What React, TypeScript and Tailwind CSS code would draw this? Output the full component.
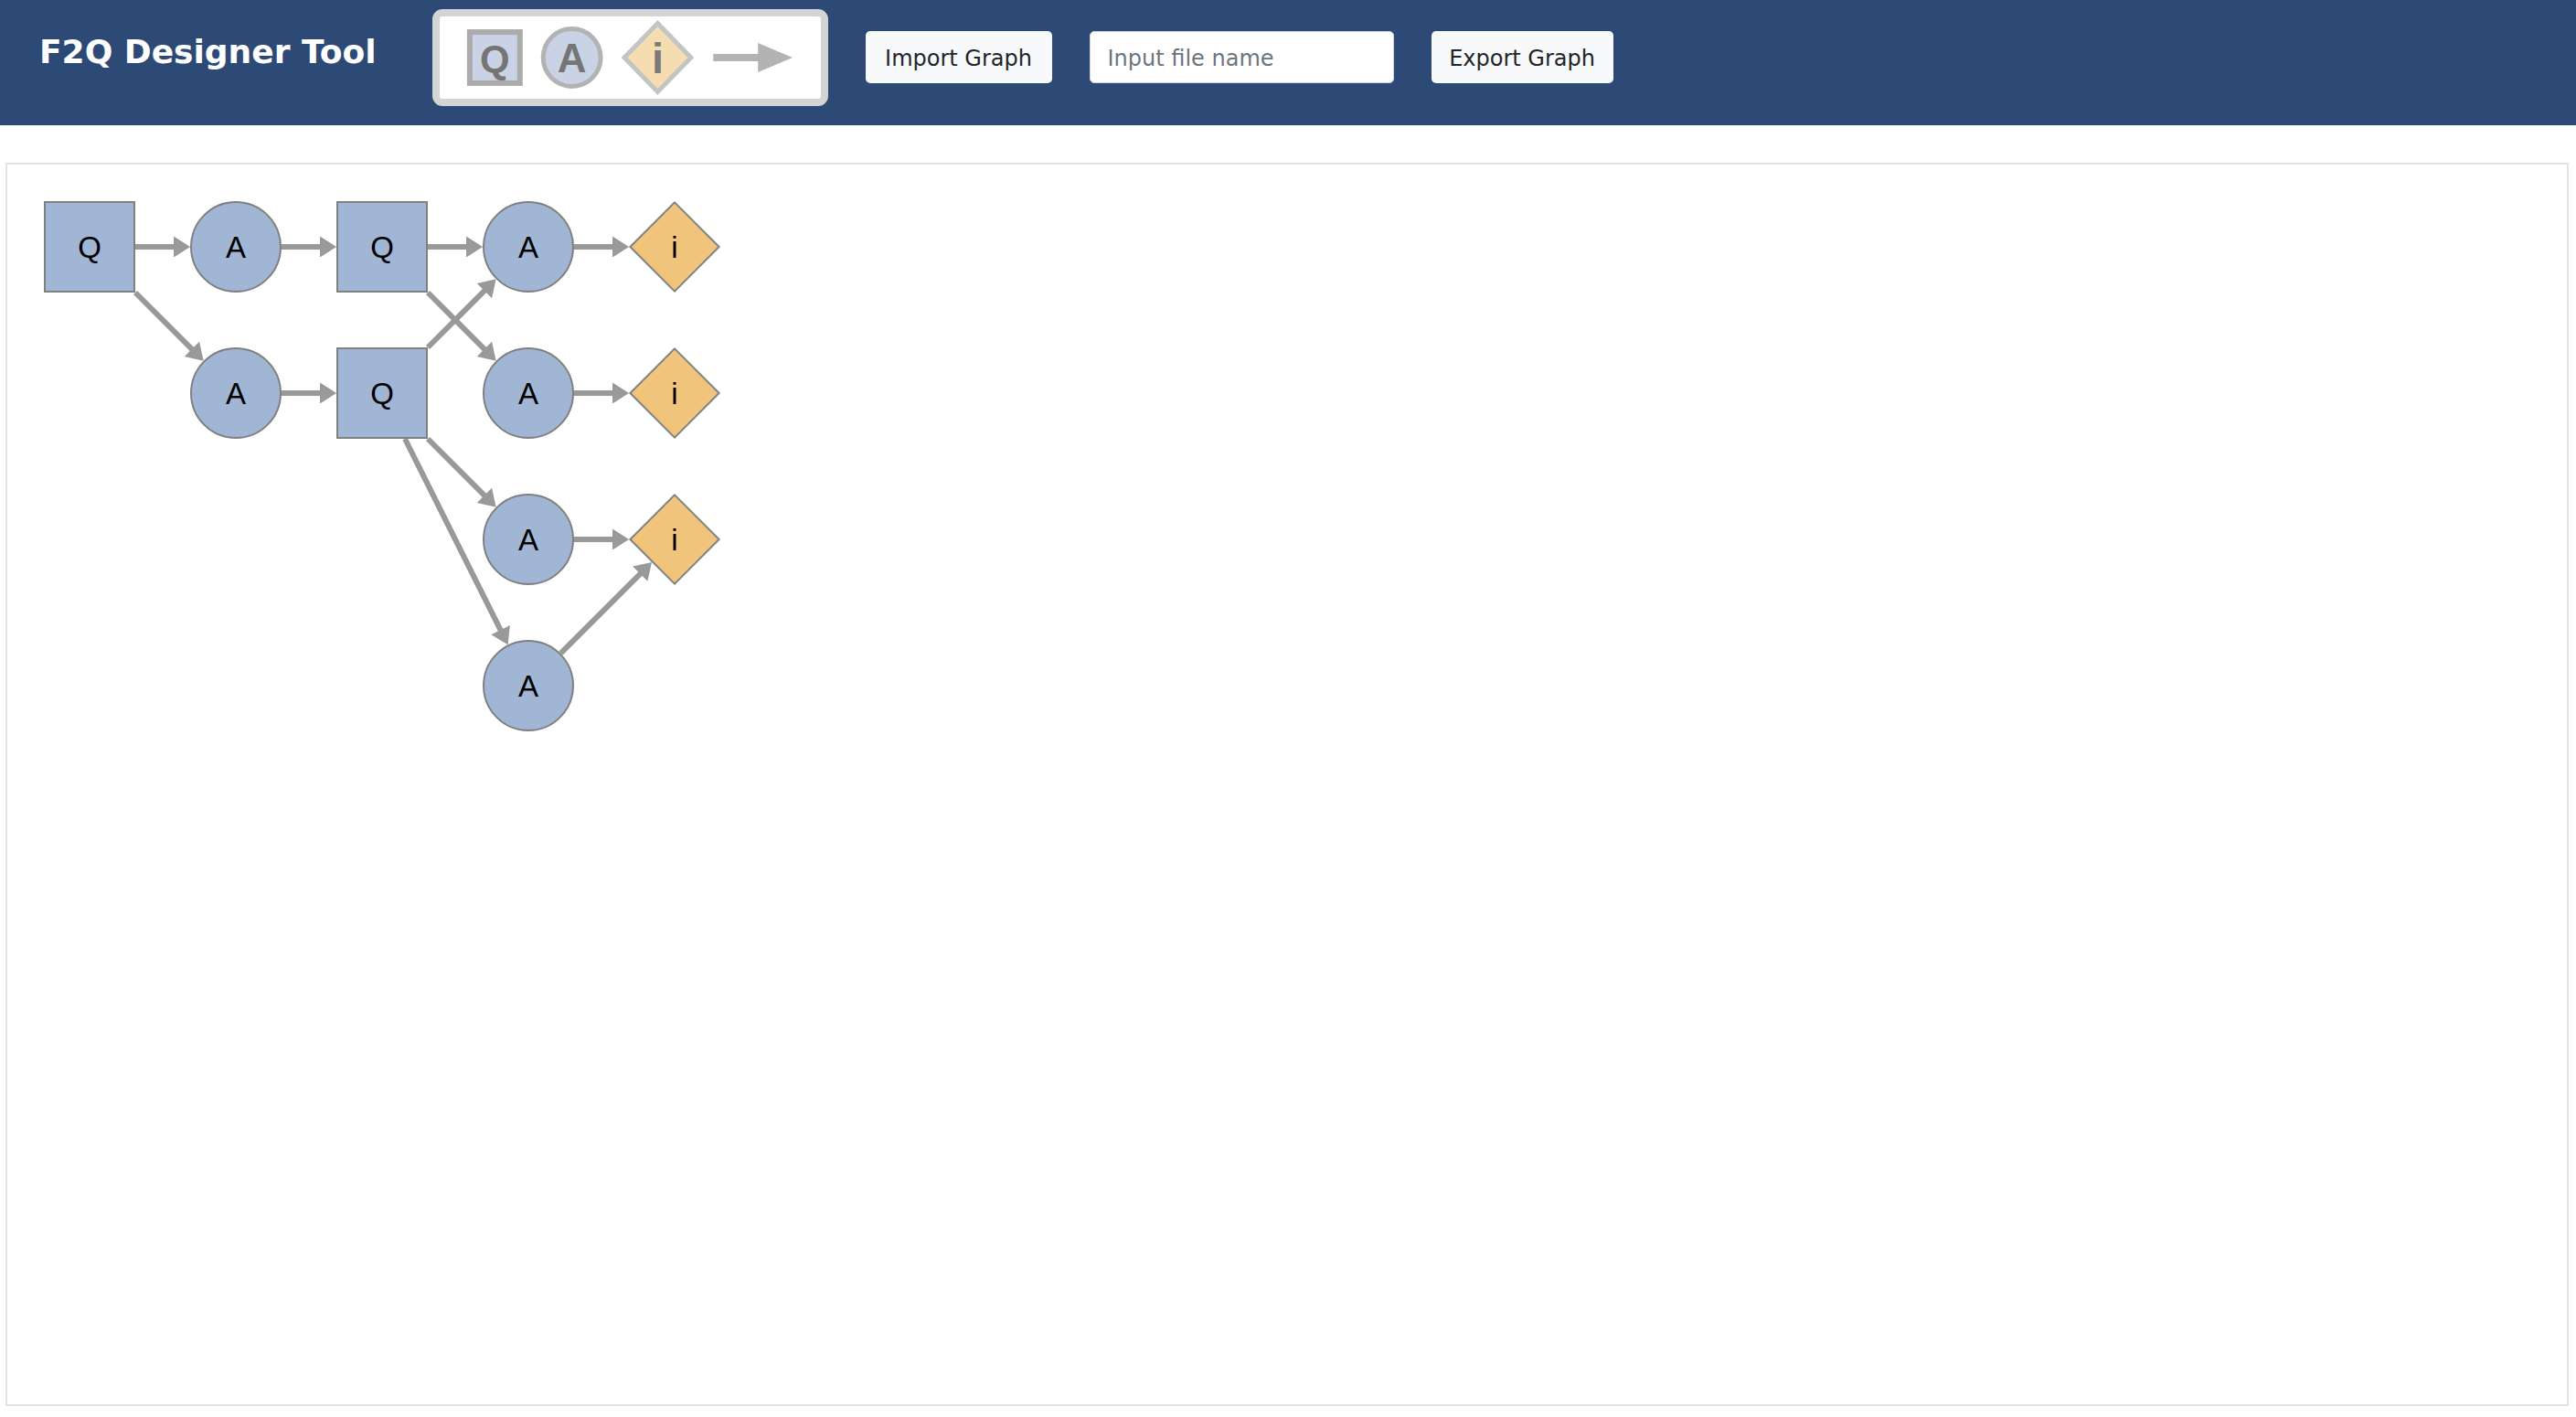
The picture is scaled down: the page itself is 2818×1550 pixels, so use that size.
import React from 'react'

type Kind = 'Q' | 'A' | 'i'

interface GraphNode {
  id: string
  x: number
  y: number
  kind: Kind
}

// canvas inner origin in page coords is (8, 180)
const nodes: GraphNode[] = [
  { id: 'q1', x: 98, y: 270, kind: 'Q' },
  { id: 'a1', x: 258, y: 270, kind: 'A' },
  { id: 'q2', x: 418, y: 270, kind: 'Q' },
  { id: 'a3', x: 578, y: 270, kind: 'A' },
  { id: 'i1', x: 738, y: 270, kind: 'i' },
  { id: 'a2', x: 258, y: 430, kind: 'A' },
  { id: 'q3', x: 418, y: 430, kind: 'Q' },
  { id: 'a4', x: 578, y: 430, kind: 'A' },
  { id: 'i2', x: 738, y: 430, kind: 'i' },
  { id: 'a5', x: 578, y: 590, kind: 'A' },
  { id: 'i3', x: 738, y: 590, kind: 'i' },
  { id: 'a6', x: 578, y: 750, kind: 'A' },
]

const edges: [string, string][] = [
  ['q1', 'a1'],
  ['a1', 'q2'],
  ['q2', 'a3'],
  ['a3', 'i1'],
  ['q1', 'a2'],
  ['a2', 'q3'],
  ['q3', 'a3'],
  ['q2', 'a4'],
  ['a4', 'i2'],
  ['q3', 'a5'],
  ['q3', 'a6'],
  ['a5', 'i3'],
  ['a6', 'i3'],
]

const byId = Object.fromEntries(nodes.map((n) => [n.id, n]))

function reach(kind: Kind, ux: number, uy: number) {
  if (kind === 'Q') return 50 / Math.max(Math.abs(ux), Math.abs(uy))
  if (kind === 'i') return 50 / (Math.abs(ux) + Math.abs(uy))
  return 50
}

function Edge({ from, to }: { from: GraphNode; to: GraphNode }) {
  const dx = to.x - from.x
  const dy = to.y - from.y
  const len = Math.hypot(dx, dy)
  const ux = dx / len
  const uy = dy / len
  const s = reach(from.kind, ux, uy)
  const e = reach(to.kind, -ux, -uy)
  const sx = from.x + ux * s
  const sy = from.y + uy * s
  const tx = to.x - ux * e
  const ty = to.y - uy * e
  const head = 18
  const half = 11.5
  const bx = tx - ux * head
  const by = ty - uy * head
  const px = -uy
  const py = ux
  return (
    <g>
      <line x1={sx} y1={sy} x2={bx + ux} y2={by + uy} stroke="#999999" strokeWidth={6} />
      <polygon
        points={`${tx},${ty} ${bx + px * half},${by + py * half} ${bx - px * half},${by - py * half}`}
        fill="#999999"
      />
    </g>
  )
}

function Node({ node }: { node: GraphNode }) {
  const { x, y, kind } = node
  return (
    <g>
      {kind === 'Q' && <rect x={x - 49} y={y - 49} width={98} height={98} fill="#a1b5d4" stroke="#808080" strokeWidth={2} />}
      {kind === 'A' && <circle cx={x} cy={y} r={49} fill="#a1b5d4" stroke="#808080" strokeWidth={2} />}
      {kind === 'i' && (
        <polygon
          points={`${x},${y - 48.6} ${x + 48.6},${y} ${x},${y + 48.6} ${x - 48.6},${y}`}
          fill="#f1c47c"
          stroke="#808080"
          strokeWidth={2}
        />
      )}
      <text
        x={x}
        y={y + 12}
        textAnchor="middle"
        fontFamily="'Liberation Sans', Arial, sans-serif"
        fontSize={33}
        fill="#000000"
      >
        {kind}
      </text>
    </g>
  )
}

function Toolbox() {
  return (
    <div className="ml-[61px] mt-[10px] h-[106px] w-[433px] rounded-[11px] border-[8px] border-[#d4d4d4] bg-white">
      <svg width="417" height="90" viewBox="0 0 418 90">
        {/* Q */}
        <rect x={33} y={17} width={55} height={56} fill="#c9d3e5" stroke="#ababab" strokeWidth={6} />
        <text x={60.5} y={61} textAnchor="middle" fontFamily="'Liberation Sans', Arial, sans-serif" fontWeight="bold" fontSize={42} fill="#757575">
          Q
        </text>
        {/* A */}
        <circle cx={145} cy={45} r={31.5} fill="#c9d3e5" stroke="#b3b3b3" strokeWidth={5} />
        <text x={145} y={61} textAnchor="middle" fontFamily="'Liberation Sans', Arial, sans-serif" fontWeight="bold" fontSize={44} fill="#757575">
          A
        </text>
        {/* i */}
        <polygon points="239,7.5 275.5,45 239,82.5 202.5,45" fill="#f6dcb1" stroke="#c4c4c4" strokeWidth={5} />
        <text x={239} y={62} textAnchor="middle" fontFamily="'Liberation Sans', Arial, sans-serif" fontWeight="bold" fontSize={47} fill="#7a7a7a">
          i
        </text>
        {/* arrow */}
        <rect x={300} y={41} width={51} height={8} fill="#b3b3b3" />
        <polygon points="349,29 387,45 349,61" fill="#b3b3b3" />
      </svg>
    </div>
  )
}

export default function App() {
  return (
    <div className="min-h-screen bg-white pb-[12px] font-['DejaVu_Sans',sans-serif]">
      {/* Header */}
      <header className="flex h-[137px] items-start bg-[#2c4a75]">
        <h1 className="ml-[43px] mt-[36px] text-[36px] font-bold leading-[42px] text-white">F2Q Designer Tool</h1>

        <Toolbox />

        <button className="ml-[41px] mt-[34px] h-[57px] w-[204px] rounded-[5px] bg-[#f8f9fa] pt-[2px] text-[24px] text-[#212529]">
          Import Graph
        </button>

        <input
          type="text"
          placeholder="Input file name"
          className="ml-[41px] mt-[34px] h-[57px] w-[333px] rounded-[5px] border border-[#ced4da] bg-white px-[19px] pt-[2px] text-[24px] text-[#212529] outline-none placeholder:text-[#6c757d]"
        />

        <button className="ml-[41px] mt-[34px] h-[57px] w-[199px] rounded-[5px] bg-[#f8f9fa] pt-[2px] text-[24px] text-[#212529]">
          Export Graph
        </button>
      </header>

      {/* Canvas */}
      <div className="relative ml-[6px] mr-[8px] mt-[41px] h-[1360px] border-2 border-[#e3e3e3]">
        <svg className="absolute inset-0 h-full w-full">
          <g transform="translate(-8 -180)">
            {edges.map(([a, b]) => (
              <Edge key={a + b} from={byId[a]} to={byId[b]} />
            ))}
            {nodes.map((n) => (
              <Node key={n.id} node={n} />
            ))}
          </g>
        </svg>
      </div>
    </div>
  )
}
